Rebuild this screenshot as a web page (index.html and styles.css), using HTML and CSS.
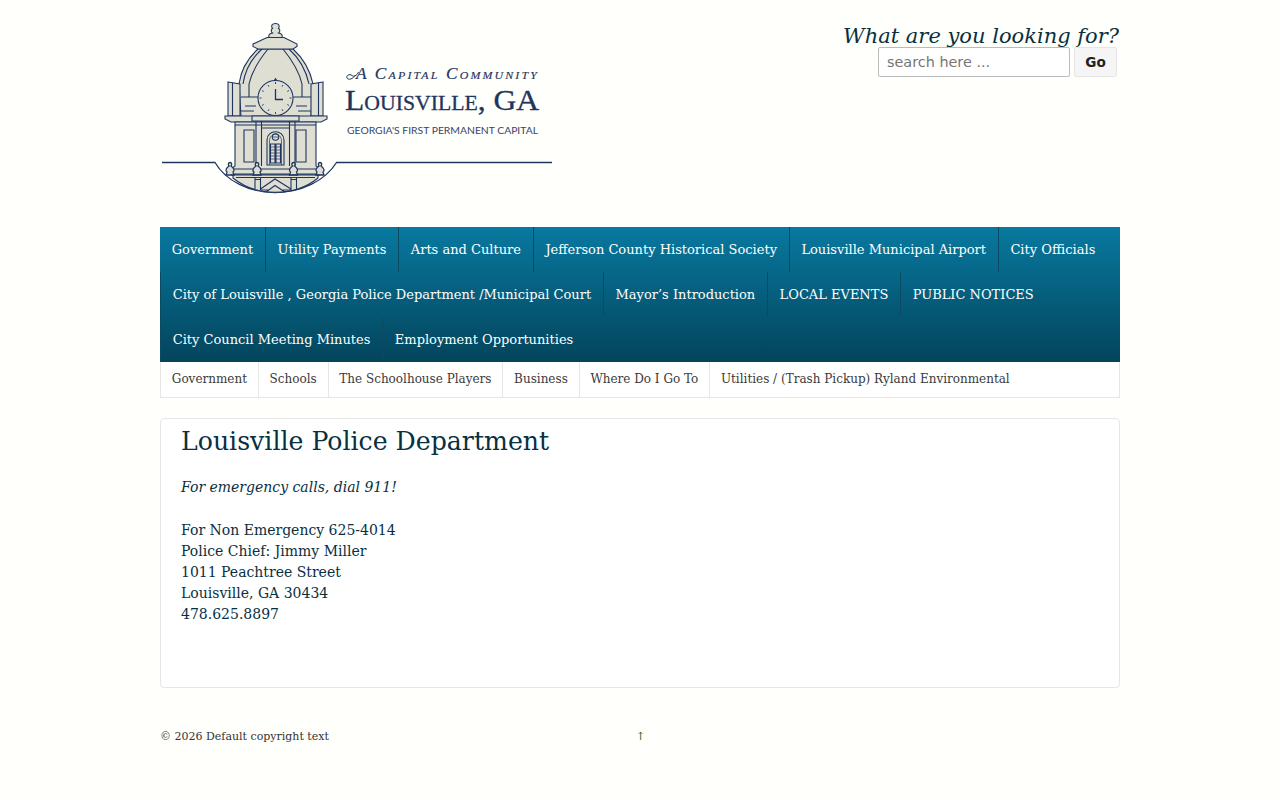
FILE: index.html
```html
<!DOCTYPE html>
<html lang="en">
<head>
<meta charset="utf-8">
<title>Louisville Police Department</title>
<link rel="stylesheet" href="styles.css">
</head>
<body>
<div class="page">
  <header class="masthead">
    <a class="logo" href="#">
      <svg class="logo-svg" width="392" height="176" viewBox="160 20 392 176">
        <g class="line">
          <!-- ground line and bowl -->
          <path class="thick" d="M162 162.500H215C226 181 249 192.500 275 192.500C301 192.500 325 181 336.500 162.500H552"/>
          <path class="fill" d="M233 174H318V178C307 187 292 192.300 275 192.300C258 192.300 244 187 233 178Z"/>
          <!-- dome -->
          <path class="fill" d="M258 49C248 58 241 70 239 84L241 117H311L313 84C310 70 303 58 293 49Z"/>
          <path d="M268 49C259 60 252 71 249 84V97M283 49C292 60 299 71 302 84V97M262 49C252 58 245 70 243 84M289 49C299 58 306 70 309 84"/>
          <path d="M241 97H258M293 97H311M245 106H256M296 106H307M241 111H254M298 111H311"/>
          <!-- side wings -->
          <path class="fill" d="M228 82L240 84V116H228Z"/>
          <path class="fill" d="M323 82L311 84V116H323Z"/>
          <path d="M232.500 83V116M318.500 83V116"/>
          <!-- cap and finial -->
          <path class="fill" d="M253 44L267 37.500H284L297 44V46.500L293 49H258L253 46.500Z"/>
          <path class="fill" d="M269 37.500C268 34.500 270 33.500 272.500 33C270.500 31.500 271 29 272.500 28.500C270.500 26 272 23.500 275.500 23.500C279 23.500 280 26 278.500 28.500C280 29 280.500 31.500 278.500 33C281 33.500 283 34.500 282 37.500Z"/>
          <!-- cornice -->
          <path class="fill" d="M225 116H327V119L321 122H231L225 119Z"/>
          <path class="fill" d="M252 116H299V121H252Z"/>
          <!-- lower body -->
          <path class="fill" d="M235 122H316V166L320 169V174H231V169L235 166Z"/>
          <path d="M235 125H316M232 169H319M256 121V166M261.500 121V166M289.500 121V166M295 121V166M261.500 128H289.500"/>
          <path class="fill" d="M244 130H254V162H244Z"/>
          <path class="fill" d="M296 130H306V162H296Z"/>
          <!-- arched door -->
          <path class="fill" d="M267 165V140C267 129 284 129 284 140V165Z"/>
          <path class="thin" d="M269.500 165V141C269.500 132 281.500 132 281.500 141V165"/>
          <circle cx="275.500" cy="137" r="3.200"/>
          <path class="thin" d="M272.500 137H278.500"/>
          <path class="fill" d="M270.500 144H275V163H270.500ZM276 144H280.500V163H276Z"/>
          <path class="thin" d="M270.500 147H275M270.500 150H275M270.500 153H275M270.500 156H275M270.500 159H275M276 147H280.500M276 150H280.500M276 153H280.500M276 156H280.500M276 159H280.500"/>
          <!-- clock -->
          <path class="dark" d="M274 81L275.500 78.800L277 81Z"/>
          <circle class="fill" cx="275.500" cy="98" r="17.500"/>
          <path class="hand" d="M275.500 89V99.500H283"/>
          <path class="tick" d="M275.500 82V84M275.500 112V114M259.500 98H261.500M289.500 98H291.500M283 85L282 86.700M289 90.500L287.300 91.500M289 105.500L287.300 104.500M283 111L282 109.300M268 111L269 109.300M262 105.500L263.700 104.500M262 90.500L263.700 91.500M268 85L269 86.700"/>
          <!-- urns -->
          <path class="urn" d="M230 162.500C228 162.500 228 165 229 166C226 168 225 171 227 172L226 175H234L233 172C235 171 234 168 231 166C232 165 232 162.500 230 162.500Z"/>
          <path class="urn" d="M257 162.500C255 162.500 255 165 256 166C253 168 252 171 254 172L253 175H261L260 172C262 171 261 168 258 166C259 165 259 162.500 257 162.500Z"/>
          <path class="urn" d="M293.500 162.500C291.500 162.500 291.500 165 292.500 166C289.500 168 288.500 171 290.500 172L289.500 175H297.500L296.500 172C298.500 171 297.500 168 294.500 166C295.500 165 295.500 162.500 293.500 162.500Z"/>
          <path class="urn" d="M320 162.500C318 162.500 318 165 319 166C316 168 315 171 317 172L316 175H324L323 172C325 171 324 168 321 166C322 165 322 162.500 320 162.500Z"/>
          <!-- base and gable -->
          <path d="M231 175H320M236 177.500H315"/>
          <path d="M255 177.500V189M260.500 177.500V190M291 177.500V190M296.500 177.500V189M255 179.500H260.500M291 179.500H296.500"/>
          <path d="M260.500 189L275 179L291 189M266 192L275 185.500L285 192M260.500 190H268M283 190H291"/>
        </g>
        <path class="swash" d="M355.500 75C353 79 348.500 80.500 347 78C345.800 75.500 349.500 73.500 352 75.500C354 77 356.500 76 358.500 72"/>
        <text class="tagline" x="356" y="79" textLength="183" lengthAdjust="spacingAndGlyphs">A Capital Community</text>
        <text class="city" x="345" y="110" textLength="194" lengthAdjust="spacingAndGlyphs">Louisville, GA</text>
        <text class="motto" x="347" y="134" textLength="191" lengthAdjust="spacingAndGlyphs">GEORGIA'S FIRST PERMANENT CAPITAL</text>
      </svg>
    </a>
    <form class="search">
      <div class="search-title">What are you looking for?</div>
      <div class="search-row">
        <input class="search-input" type="text" placeholder="search here ...">
        <button class="search-go" type="button">Go</button>
      </div>
    </form>
  </header>

  <nav>
    <ul class="primary">
      <li><a href="#">Government</a></li>
      <li><a href="#">Utility Payments</a></li>
      <li><a href="#">Arts and Culture</a></li>
      <li><a href="#">Jefferson County Historical Society</a></li>
      <li><a href="#">Louisville Municipal Airport</a></li>
      <li><a href="#">City Officials</a></li>
      <li><a href="#">City of Louisville , Georgia Police Department /Municipal Court</a></li>
      <li><a href="#">Mayor’s Introduction</a></li>
      <li><a href="#">LOCAL EVENTS</a></li>
      <li><a href="#">PUBLIC NOTICES</a></li>
      <li><a href="#">City Council Meeting Minutes</a></li>
      <li><a href="#">Employment Opportunities</a></li>
    </ul>
    <ul class="secondary">
      <li><a href="#">Government</a></li>
      <li><a href="#">Schools</a></li>
      <li><a href="#">The Schoolhouse Players</a></li>
      <li><a href="#">Business</a></li>
      <li><a href="#">Where Do I Go To</a></li>
      <li><a href="#">Utilities / (Trash Pickup) Ryland Environmental</a></li>
    </ul>
  </nav>

  <main class="content">
    <h1 class="title">Louisville Police Department</h1>
    <p class="note">For emergency calls, dial 911!</p>
    <p class="details">For Non Emergency 625-4014<br>Police Chief: Jimmy Miller<br>1011 Peachtree Street<br>Louisville, GA 30434<br>478.625.8897</p>
  </main>

  <footer class="foot">
    <span class="copy">© 2026 Default copyright text</span>
    <a class="top" href="#">↑</a>
  </footer>
</div>
</body>
</html>
```

FILE: styles.css
```css
html, body {
  margin: 0;
  padding: 0;
}
body {
  background: #fffffb;
  color: #08303f;
  font-family: "DejaVu Serif", serif;
  font-size: 14px;
  line-height: 21px;
}
a {
  color: inherit;
  text-decoration: none;
}
.page {
  width: 960px;
  margin: 0 auto;
}
.masthead {
  display: flex;
  justify-content: space-between;
  height: 227px;
}
.logo {
  display: block;
  padding-top: 20px;
  height: 176px;
}
.logo-svg {
  display: block;
}
.line {
  fill: none;
  stroke: #1f3560;
  stroke-width: 1.100;
}
.line .fill {
  fill: #dfded2;
}
.line .thick {
  stroke-width: 1.300;
}
.line .thin {
  stroke-width: .700;
}
.line .tick {
  stroke-width: .900;
}
.line .dark {
  fill: #1f3560;
}
.line .hand {
  stroke-width: 1.300;
}
.line .urn {
  fill: #dfded2;
  stroke-width: 1.300;
}
.swash {
  fill: none;
  stroke: #1f3560;
  stroke-width: 1;
}
.tagline {
  font-family: "Liberation Serif", serif;
  font-style: italic;
  font-variant: small-caps;
  font-size: 16px;
  letter-spacing: 2px;
  fill: #1f3560;
  stroke: #1f3560;
  stroke-width: .15px;
}
.city {
  font-family: "Liberation Serif", serif;
  font-variant: small-caps;
  font-size: 29px;
  fill: #1f3560;
  stroke: #1f3560;
  stroke-width: .3px;
}
.motto {
  font-family: "Lato", sans-serif;
  font-size: 9.300px;
  fill: #33466f;
}
.search {
  display: flex;
  flex-direction: column;
  align-items: flex-end;
  padding: 23px 1px 0 0;
}
.search-title {
  font-size: 21px;
  font-style: italic;
  line-height: 26px;
}
.search-row {
  display: flex;
  gap: 4px;
  padding-right: 2px;
  margin-top: -2px;
}
.search-input {
  box-sizing: border-box;
  width: 192px;
  height: 30px;
  padding: 0 8px;
  border: 1px solid #bbb;
  border-radius: 2px;
  background: #fff;
  font-family: "DejaVu Sans", sans-serif;
  font-size: 14.400px;
  color: #333;
}
.search-input::placeholder {
  color: #757575;
}
.search-go {
  box-sizing: border-box;
  width: 43px;
  height: 30px;
  padding: 0;
  border: 1px solid #e6e6e6;
  border-radius: 2px;
  background: #f5f5f5;
  font-family: "DejaVu Sans", sans-serif;
  font-size: 13.600px;
  font-weight: 700;
  color: #222;
}
.primary {
  display: flex;
  flex-wrap: wrap;
  margin: 0;
  padding: 0;
  list-style: none;
  background: linear-gradient(#08799f, #03445c);
}
.primary li {
  border-left: 1px solid #0a4a63;
}
.primary li:first-child {
  border-left: 0;
}
.primary a {
  display: block;
  padding: 0 11.700px;
  line-height: 45px;
  font-size: 13px;
  color: #fff;
}
.secondary {
  display: flex;
  margin: 0;
  padding: 0;
  list-style: none;
  background: #fff;
  border: 1px solid #e6e6e6;
  border-top: 0;
}
.secondary li {
  border-left: 1px solid #e6e6e6;
}
.secondary li:first-child {
  border-left: 0;
}
.secondary a {
  display: block;
  padding: 0 10.800px;
  line-height: 35px;
  font-size: 12px;
  color: #3a3a3a;
}
.content {
  box-sizing: border-box;
  height: 270px;
  margin-top: 20px;
  padding: 0 20px;
  background: #fff;
  border: 1px solid #e6e6e6;
  border-radius: 4px;
}
.title {
  margin: 0;
  padding-top: 7px;
  font-size: 25.200px;
  font-weight: 400;
  line-height: 31px;
}
.note {
  margin: 20px 0 22px;
  font-style: italic;
}
.details {
  margin: 0;
}
.foot {
  display: flex;
  align-items: center;
  margin-top: 39px;
  font-size: 11px;
  line-height: 20px;
  color: #333;
}
.copy {
  width: 476px;
}
.top {
  color: #3a5a1a;
}
```
